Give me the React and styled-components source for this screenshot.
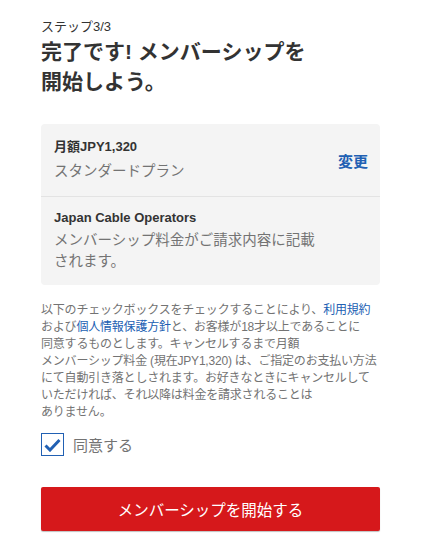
import React, { useState } from 'react';
import styled, { createGlobalStyle } from 'styled-components';

const GlobalStyle = createGlobalStyle`
  body {
    margin: 0;
    background: #fff;
    font-family: Arial, "Liberation Sans", "Noto Sans CJK JP", sans-serif;
    color: #333;
  }
`;

const Page = styled.div`
  padding: 19px 42px 20px 41px;
  width: 339px;
`;

const StepLabel = styled.div`
  font-size: 13px;
  line-height: 16px;
  color: #333;
`;

const Title = styled.h1`
  margin: 2px 0 0;
  font-size: 21px;
  line-height: 30px;
  font-weight: 700;
  color: #333;
`;

const PlanBox = styled.div`
  margin-top: 27px;
  background: #f4f4f4;
  border-radius: 4px;
`;

const PlanRow = styled.div`
  display: flex;
  align-items: center;
  justify-content: space-between;
  padding: ${p => p.$padding || '14px 12px 12px 13px'};
  border-top: ${p => (p.$divider ? '1px solid #e3e3e3' : 'none')};
`;

const PlanInfo = styled.div`
  display: flex;
  flex-direction: column;
`;

const PlanTitle = styled.div`
  font-size: 13px;
  line-height: 18px;
  font-weight: 700;
  color: #333;
`;

const PlanSub = styled.div`
  margin-top: ${p => p.$gap || '3px'};
  font-size: 14.5px;
  line-height: 21px;
  color: #737373;
`;

const ChangeLink = styled.a`
  font-size: 15px;
  font-weight: 700;
  color: #2160b3;
  text-decoration: none;
  cursor: pointer;
`;

const Legal = styled.p`
  margin: 17px 0 0;
  font-size: 12px;
  line-height: 17px;
  color: #737373;
  letter-spacing: -0.2px;
`;

const LegalLink = styled.a`
  color: #2160b3;
  text-decoration: none;
`;

const CheckRow = styled.label`
  margin-top: 12px;
  display: flex;
  align-items: center;
  gap: 9px;
  cursor: pointer;
`;

const CheckBox = styled.span`
  width: 21px;
  height: 21px;
  border: 1.5px solid #2160b3;
  display: flex;
  align-items: center;
  justify-content: center;
  background: #fff;
`;

const CheckLabel = styled.span`
  font-size: 15px;
  color: #737373;
`;

const SubmitButton = styled.button`
  margin-top: 31px;
  width: 100%;
  height: 44px;
  border: none;
  border-radius: 2px;
  background: #d6181b;
  color: #fff;
  font-family: inherit;
  font-size: 15.5px;
  box-shadow: 0 1px 1px rgba(0, 0, 0, 0.25);
  cursor: pointer;
`;

export default function App() {
  const [agreed, setAgreed] = useState(true);

  return (
    <>
      <GlobalStyle />
      <Page>
        <StepLabel>ステップ3/3</StepLabel>
        <Title>
          完了です! メンバーシップを
          <br />
          開始しよう。
        </Title>

        <PlanBox>
          <PlanRow $padding="14px 12px 14px 13px">
            <PlanInfo>
              <PlanTitle>月額JPY1,320</PlanTitle>
              <PlanSub $gap="5px">スタンダードプラン</PlanSub>
            </PlanInfo>
            <ChangeLink>変更</ChangeLink>
          </PlanRow>
          <PlanRow $divider $padding="12px 12px 13px 13px">
            <PlanInfo>
              <PlanTitle>Japan Cable Operators</PlanTitle>
              <PlanSub $gap="3px">
                メンバーシップ料金がご請求内容に記載
                <br />
                されます。
              </PlanSub>
            </PlanInfo>
          </PlanRow>
        </PlanBox>

        <Legal>
          以下のチェックボックスをチェックすることにより、<LegalLink>利用規約</LegalLink>
          <br />
          および<LegalLink>個人情報保護方針</LegalLink>と、お客様が18才以上であることに
          <br />
          同意するものとします。キャンセルするまで月額
          <br />
          メンバーシップ料金 (現在JPY1,320) は、ご指定のお支払い方法
          <br />
          にて自動引き落としされます。お好きなときにキャンセルして
          <br />
          いただければ、それ以降は料金を請求されることは
          <br />
          ありません。
        </Legal>

        <CheckRow onClick={() => setAgreed(a => !a)}>
          <CheckBox>
            {agreed && (
              <svg width="17" height="14" viewBox="0 0 17 14">
                <path d="M1.5 7.5 L6 12 L15.5 2" fill="none" stroke="#2160b3" strokeWidth="3" />
              </svg>
            )}
          </CheckBox>
          <CheckLabel>同意する</CheckLabel>
        </CheckRow>

        <SubmitButton>メンバーシップを開始する</SubmitButton>
      </Page>
    </>
  );
}
